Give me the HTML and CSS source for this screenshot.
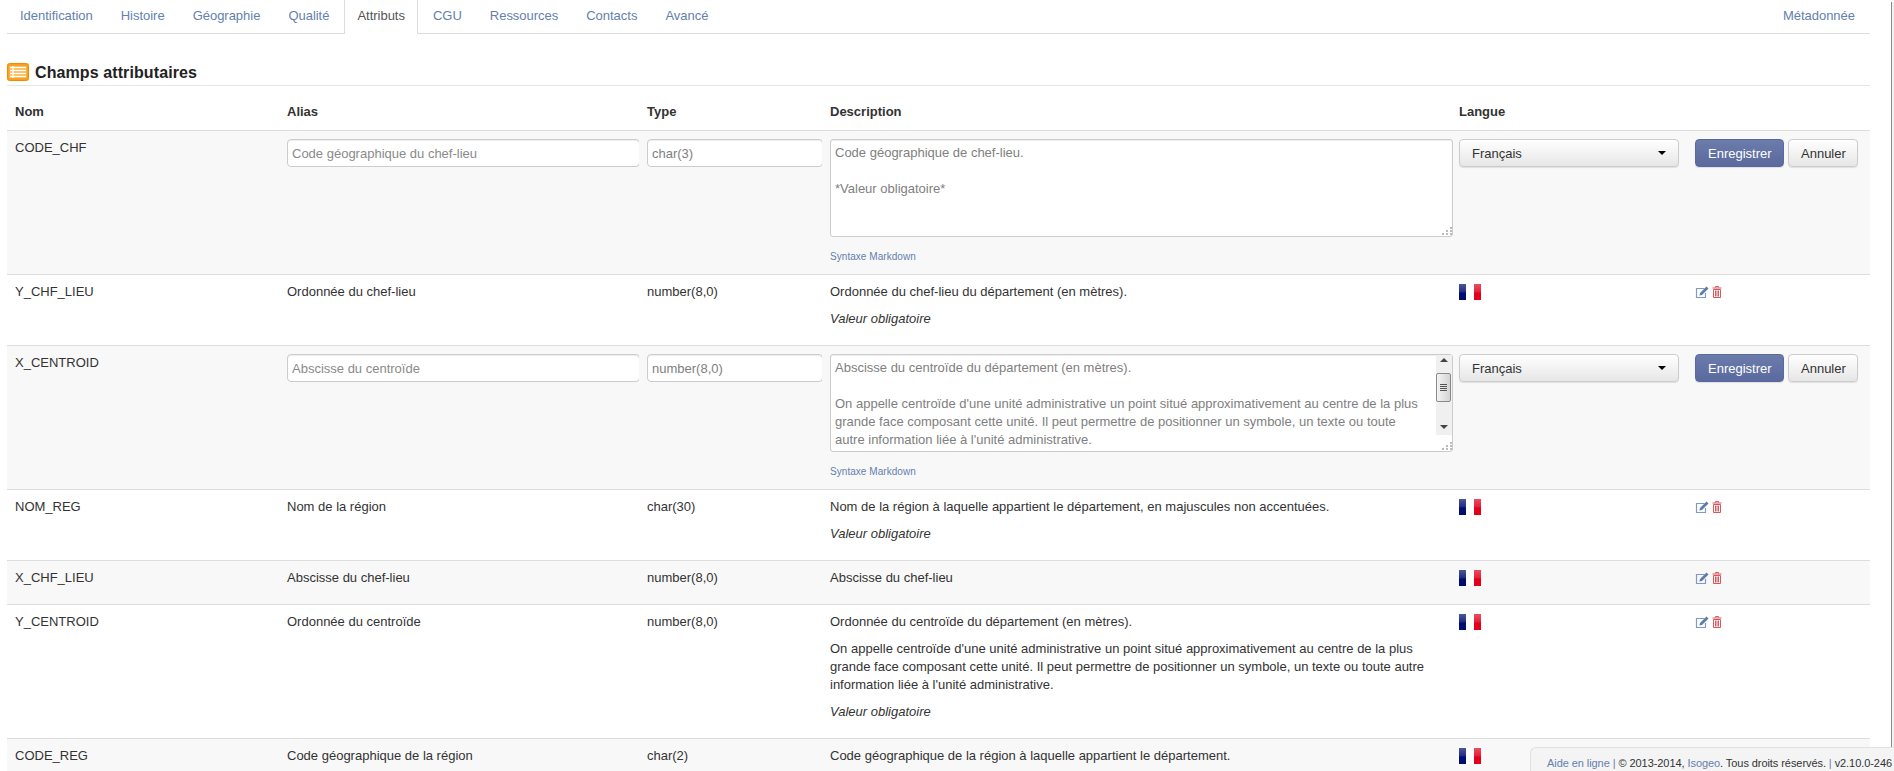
FILE: index.html
```html
<!DOCTYPE html>
<html lang="fr">
<head>
  <meta charset="UTF-8" />
  <title>Attributs</title>
  <link rel="stylesheet" href="styles.css">
</head>
<body>
  <ul class="tabs">
    <li><a href="#">Identification</a></li>
    <li><a href="#">Histoire</a></li>
    <li><a href="#">Géographie</a></li>
    <li><a href="#">Qualité</a></li>
    <li class="active"><a href="#">Attributs</a></li>
    <li><a href="#">CGU</a></li>
    <li><a href="#">Ressources</a></li>
    <li><a href="#">Contacts</a></li>
    <li><a href="#">Avancé</a></li>
    <li class="tab-right"><a href="#">Métadonnée</a></li>
  </ul>

  <h3 class="title">
    <svg class="title-icon" viewBox="0 0 22 18">
      <rect x="0.5" y="0.5" width="21" height="17" rx="2" fill="#f7a11f" stroke="#f08c00"/>
      <rect x="2.5" y="3" width="17" height="12" fill="#fbc46c"/>
      <path d="M3 4.5h16M3 7.5h16M3 10.5h16M3 13.5h16M6 3v12" stroke="#fff" stroke-width="1.2" fill="none"/>
    </svg>
    Champs attributaires
  </h3>

  <table class="attrs">
    <thead>
      <tr>
        <th class="col-name">Nom</th>
        <th class="col-alias">Alias</th>
        <th class="col-type">Type</th>
        <th class="col-desc">Description</th>
        <th class="col-lang">Langue</th>
        <th class="col-actions"></th>
      </tr>
    </thead>
    <tbody>
      <tr class="edit">
        <td>CODE_CHF</td>
        <td><input class="field" type="text" placeholder="Code géographique du chef-lieu"></td>
        <td><input class="field" type="text" value="char(3)"></td>
        <td>
          <div class="area-wrap">
            <textarea class="area">Code géographique de chef-lieu.

*Valeur obligatoire*</textarea>
            <svg class="grip" viewBox="0 0 10 10"><path d="M8 1h2v2H8zM8 4h2v2H8zM4 4h2v2H4zM8 7h2v2H8zM4 7h2v2H4zM0 7h2v2H0z" fill="#bbb"/></svg>
          </div>
          <a class="syntax" href="#">Syntaxe Markdown</a>
        </td>
        <td><button class="btn lang-btn">Français<span class="caret"></span></button></td>
        <td>
          <div class="btn-row">
            <button class="btn btn-primary">Enregistrer</button>
            <button class="btn">Annuler</button>
          </div>
        </td>
      </tr>
      <tr>
        <td>Y_CHF_LIEU</td>
        <td>Ordonnée du chef-lieu</td>
        <td>number(8,0)</td>
        <td>
          <p>Ordonnée du chef-lieu du département (en mètres).</p>
          <p><em>Valeur obligatoire</em></p>
        </td>
        <td><span class="flag"></span></td>
        <td>
          <span class="icons">
            <svg class="ico" viewBox="0 0 14 12"><path d="M9.5 2.5H1.5v9h9V7" fill="none" stroke="#7f9ac6" stroke-width="1.2"/><path d="M11.5.5l2 2L7 9l-2.6.6L5 7z" fill="#5f7cad"/></svg>
            <svg class="ico-del" viewBox="0 0 10 12"><path d="M3.5 1.5V.5h3v1M.5 2h9M1.5 3.5h7v8h-7zM3.5 4.5v6M5 4.5v6M6.5 4.5v6" fill="none" stroke="#d5585f" stroke-width="1"/></svg>
          </span>
        </td>
      </tr>
      <tr class="edit">
        <td>X_CENTROID</td>
        <td><input class="field" type="text" placeholder="Abscisse du centroïde"></td>
        <td><input class="field" type="text" value="number(8,0)"></td>
        <td>
          <div class="area-wrap">
            <textarea class="area area-scroll">Abscisse du centroïde du département (en mètres).

On appelle centroïde d'une unité administrative un point situé approximativement au centre de la plus grande face composant cette unité. Il peut permettre de positionner un symbole, un texte ou toute autre information liée à l'unité administrative.</textarea>
            <div class="scroll">
              <span class="arrow-up"></span>
              <span class="thumb"></span>
              <span class="arrow-down"></span>
            </div>
            <svg class="grip" viewBox="0 0 10 10"><path d="M8 1h2v2H8zM8 4h2v2H8zM4 4h2v2H4zM8 7h2v2H8zM4 7h2v2H4zM0 7h2v2H0z" fill="#bbb"/></svg>
          </div>
          <a class="syntax" href="#">Syntaxe Markdown</a>
        </td>
        <td><button class="btn lang-btn">Français<span class="caret"></span></button></td>
        <td>
          <div class="btn-row">
            <button class="btn btn-primary">Enregistrer</button>
            <button class="btn">Annuler</button>
          </div>
        </td>
      </tr>
      <tr>
        <td>NOM_REG</td>
        <td>Nom de la région</td>
        <td>char(30)</td>
        <td>
          <p>Nom de la région à laquelle appartient le département, en majuscules non accentuées.</p>
          <p><em>Valeur obligatoire</em></p>
        </td>
        <td><span class="flag"></span></td>
        <td>
          <span class="icons">
            <svg class="ico" viewBox="0 0 14 12"><path d="M9.5 2.5H1.5v9h9V7" fill="none" stroke="#7f9ac6" stroke-width="1.2"/><path d="M11.5.5l2 2L7 9l-2.6.6L5 7z" fill="#5f7cad"/></svg>
            <svg class="ico-del" viewBox="0 0 10 12"><path d="M3.5 1.5V.5h3v1M.5 2h9M1.5 3.5h7v8h-7zM3.5 4.5v6M5 4.5v6M6.5 4.5v6" fill="none" stroke="#d5585f" stroke-width="1"/></svg>
          </span>
        </td>
      </tr>
      <tr>
        <td>X_CHF_LIEU</td>
        <td>Abscisse du chef-lieu</td>
        <td>number(8,0)</td>
        <td><p>Abscisse du chef-lieu</p></td>
        <td><span class="flag"></span></td>
        <td>
          <span class="icons">
            <svg class="ico" viewBox="0 0 14 12"><path d="M9.5 2.5H1.5v9h9V7" fill="none" stroke="#7f9ac6" stroke-width="1.2"/><path d="M11.5.5l2 2L7 9l-2.6.6L5 7z" fill="#5f7cad"/></svg>
            <svg class="ico-del" viewBox="0 0 10 12"><path d="M3.5 1.5V.5h3v1M.5 2h9M1.5 3.5h7v8h-7zM3.5 4.5v6M5 4.5v6M6.5 4.5v6" fill="none" stroke="#d5585f" stroke-width="1"/></svg>
          </span>
        </td>
      </tr>
      <tr>
        <td>Y_CENTROID</td>
        <td>Ordonnée du centroïde</td>
        <td>number(8,0)</td>
        <td>
          <p>Ordonnée du centroïde du département (en mètres).</p>
          <p>On appelle centroïde d'une unité administrative un point situé approximativement au centre de la plus grande face composant cette unité. Il peut permettre de positionner un symbole, un texte ou toute autre information liée à l'unité administrative.</p>
          <p><em>Valeur obligatoire</em></p>
        </td>
        <td><span class="flag"></span></td>
        <td>
          <span class="icons">
            <svg class="ico" viewBox="0 0 14 12"><path d="M9.5 2.5H1.5v9h9V7" fill="none" stroke="#7f9ac6" stroke-width="1.2"/><path d="M11.5.5l2 2L7 9l-2.6.6L5 7z" fill="#5f7cad"/></svg>
            <svg class="ico-del" viewBox="0 0 10 12"><path d="M3.5 1.5V.5h3v1M.5 2h9M1.5 3.5h7v8h-7zM3.5 4.5v6M5 4.5v6M6.5 4.5v6" fill="none" stroke="#d5585f" stroke-width="1"/></svg>
          </span>
        </td>
      </tr>
      <tr>
        <td>CODE_REG</td>
        <td>Code géographique de la région</td>
        <td>char(2)</td>
        <td><p>Code géographique de la région à laquelle appartient le département.</p></td>
        <td><span class="flag"></span></td>
        <td></td>
      </tr>
    </tbody>
  </table>

  <div class="footer">
    <a href="#">Aide en ligne</a> <span class="sep">|</span> © 2013-2014, <a href="#">Isogeo</a>. Tous droits réservés. <span class="sep">|</span> v2.10.0-246
  </div>
</body>
</html>
```

FILE: styles.css
```css
html, body { height: 100%; overflow: hidden; }
body { margin: 0; padding: 0 24px 0 7px; background: #fff; color: #333; font-family: "Liberation Sans", Arial, sans-serif; font-size: 13px; line-height: 18px; }
body::after { content: ""; position: fixed; top: 2px; right: 0; bottom: 0; width: 2px; background: #f2f2f2; border-left: 1px solid #8c8c8c; }
a { color: #6480ae; text-decoration: none; }

.tabs { display: flex; gap: 2px; margin: 0; padding: 0; list-style: none; border-bottom: 1px solid #ddd; height: 33px; letter-spacing: -.02px; }
.tabs a { display: block; padding: 7px 13px 8px; }
.tabs .active { height: 34px; background: #fff; border: 1px solid #ddd; border-width: 0 1px; }
.tabs .active a { padding: 7px 12px 8px; color: #555; }
.tab-right { margin: 0 2px 0 auto; }

.title { display: flex; align-items: center; gap: 6px; margin: 27px 0 0; border-bottom: 1px solid #e5e5e5; color: #222; font-size: 16px; line-height: 24px; font-weight: bold; letter-spacing: .1px; }
.title-icon { width: 22px; height: 18px; margin-top: -2px; }

.attrs { width: 100%; margin-top: 9px; table-layout: fixed; border-collapse: separate; border-spacing: 0; }
.attrs th { padding: 8px 8px 9px; text-align: left; font-weight: bold; }
.attrs td { padding: 8px; vertical-align: top; border-top: 1px solid #ddd; }
.attrs tbody tr:nth-child(odd) td { background: #f8f8f8; }
.col-name { width: 256px; }
.col-alias { width: 344px; }
.col-type { width: 167px; }
.col-desc { width: 613px; }
.col-lang { width: 220px; }
.col-actions { width: 167px; }

.attrs .edit td { padding-right: 0; }
.attrs p { margin: 0 0 9px; }

.field { display: block; box-sizing: border-box; width: calc(100% + 1px); height: 28px; padding: 4px; border: 1px solid #ccc; border-radius: 4px; background: #fff; color: #808080; font: 13px/18px "Liberation Sans", Arial, sans-serif; box-shadow: inset 0 1px 1px rgba(0,0,0,.075); }
.field::placeholder { color: #8a8a8a; opacity: 1; }

.area-wrap { position: relative; width: calc(100% + 2px); height: 98px; margin-bottom: 11px; }
.area { display: block; box-sizing: border-box; width: 100%; height: 98px; padding: 4px; border: 1px solid #ccc; border-radius: 3px; background: #fff; color: #808080; font: 13px/18px "Liberation Sans", Arial, sans-serif; resize: none; overflow: hidden; box-shadow: inset 0 1px 1px rgba(0,0,0,.075); }
.area-scroll { padding-right: 28px; }
.grip { position: absolute; right: 1px; bottom: 1px; width: 10px; height: 10px; }
.syntax { display: block; font-size: 10px; letter-spacing: .05px; }

.scroll { position: absolute; top: 1px; right: 1px; width: 16px; height: 80px; background: #f0f0f0; }
.thumb { position: absolute; top: 18px; left: 0; box-sizing: border-box; width: 15px; height: 29px; border: 1px solid #8a8a8a; border-radius: 2px; background: repeating-linear-gradient(#555 0 1px, transparent 1px 2px) center / 7px 7px no-repeat, linear-gradient(90deg, #f4f4f4, #d4d4d4); }
.arrow-up, .arrow-down { position: absolute; left: 4px; width: 0; height: 0; border: 4px solid transparent; }
.arrow-up { top: 3px; border-top: 0; border-bottom-color: #444; }
.arrow-down { bottom: 6px; border-bottom: 0; border-top-color: #444; }

.btn { box-sizing: border-box; height: 28px; padding: 0 12px; border: 1px solid #ccc; border-radius: 4px; background: linear-gradient(#fff, #e6e6e6); color: #333; font: 13px "Liberation Sans", Arial, sans-serif; box-shadow: 0 1px 1px rgba(0,0,0,.1); }
.btn-primary { border-color: #5a6a9e; background: linear-gradient(#6b7bab, #5a6a9e); color: #fff; }
.btn-row { display: flex; gap: 4px; }
.btn-row .btn-primary { width: 89px; }
.btn-row .btn:last-child { width: 70px; }
.lang-btn { display: flex; align-items: center; justify-content: space-between; width: 220px; }
.caret { width: 0; height: 0; border: 4px solid transparent; border-top-color: #000; border-bottom: 0; }

.flag { display: block; width: 22px; height: 16px; margin-top: 1px; background: linear-gradient(90deg, #1f2c80 0 7px, #fff 7px 15px, #e3102a 15px); background: linear-gradient(rgba(255,255,255,.3), rgba(255,255,255,.12) 50%, rgba(255,255,255,0) 55%), linear-gradient(90deg, #000f6e 0 7px, #fff 7px 15px, #e3001b 15px); }
.icons { display: flex; gap: 3px; align-items: flex-start; padding-top: 3px; }
.ico { width: 14px; height: 12px; }
.ico-del { width: 10px; height: 12px; }

.footer { position: fixed; right: 0; bottom: 0; z-index: 1; box-sizing: border-box; width: 364px; height: 24px; padding: 6px 0 0 16px; overflow: hidden; white-space: nowrap; background: #f4f4f4; border: 1px solid #e0e0e0; border-width: 1px 0 0 1px; border-top-left-radius: 6px; font-size: 11px; line-height: 18px; letter-spacing: -.07px; }
.sep { color: #6480ae; }
```
